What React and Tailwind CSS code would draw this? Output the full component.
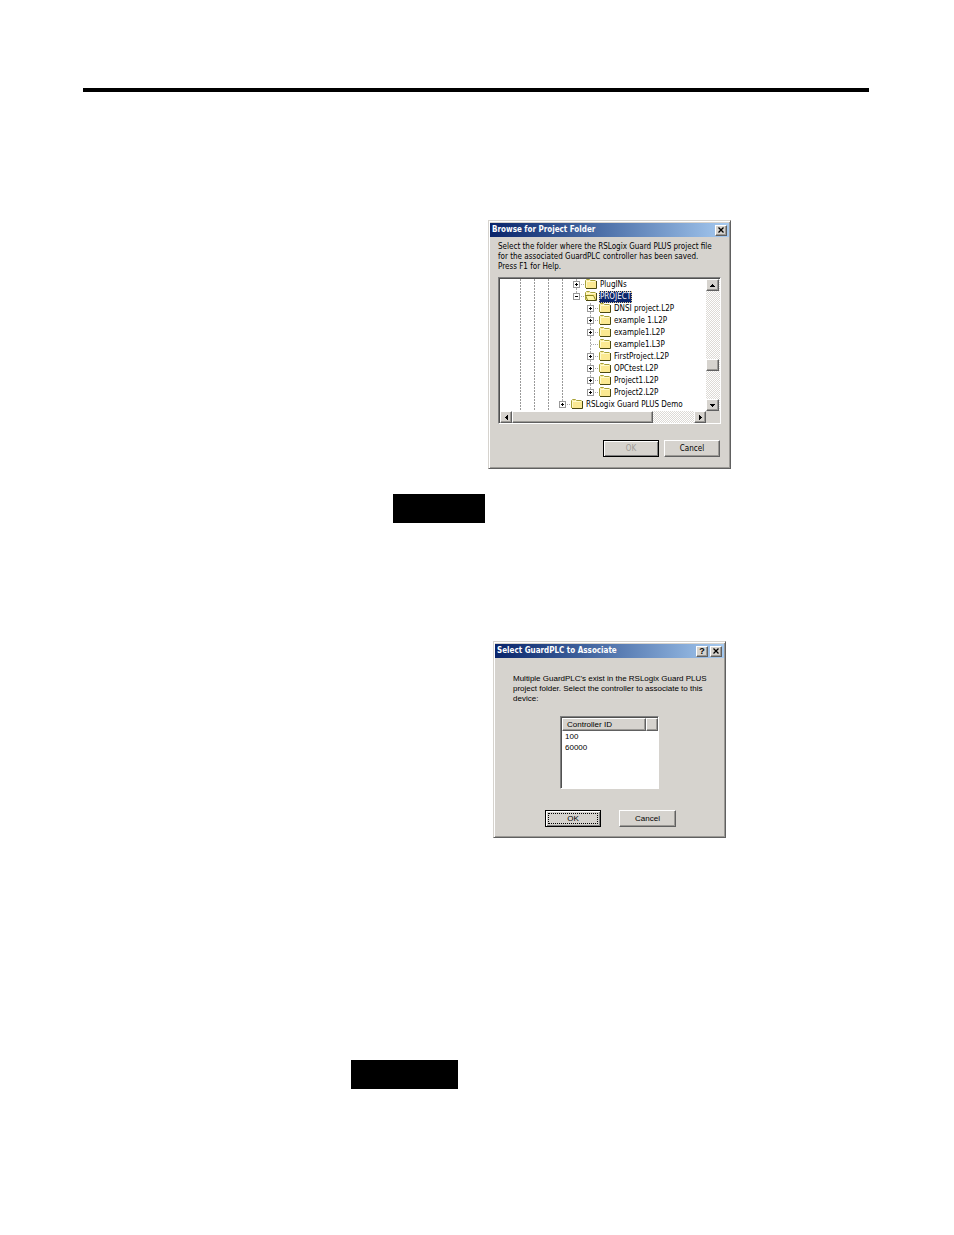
import { useState } from "react";

const folders = [
  { name: "PlugINs", level: 1, sign: "+" },
  { name: "PROJECT", level: 1, sign: "-", open: true },
  { name: "DNSI project.L2P", level: 2, sign: "+" },
  { name: "example 1.L2P", level: 2, sign: "+" },
  { name: "example1.L2P", level: 2, sign: "+" },
  { name: "example1.L3P", level: 2, sign: "" },
  { name: "FirstProject.L2P", level: 2, sign: "+" },
  { name: "OPCtest.L2P", level: 2, sign: "+" },
  { name: "Project1.L2P", level: 2, sign: "+" },
  { name: "Project2.L2P", level: 2, sign: "+", last: true },
  { name: "RSLogix Guard PLUS Demo", level: 0, sign: "+", last: true },
];

const raised = "border border-t-white border-l-white border-r-[#606060] border-b-[#606060] bg-[#d6d3ce] shadow-[inset_-1px_-1px_0_#9c9a96]";
const checker = "bg-[conic-gradient(#fff_25%,#dddad5_0_50%,#fff_0_75%,#dddad5_0)] bg-size-[2px_2px]";

function Arrow({ d }) {
  return (
    <svg width="7" height="7" viewBox="0 0 7 7" shapeRendering="crispEdges">
      <path d={d} fill="#000" />
    </svg>
  );
}

function FolderIcon({ open }) {
  return (
    <svg width="12" height="10" viewBox="0 0 12 10" className="shrink-0">
      <path d="M1 9.5H11.5V2" fill="none" stroke="#4a4810" />
      <path d="M.5 9V1.5L1.5 .5H4.5L5.5 1.5H10.5" fill="none" stroke="#a8a238" />
      <path d="M1 9V2L2 1H4L5 2H11V9Z" fill="#fbe992" />
      <path d="M1.5 8V2.5H10" fill="none" stroke="#fffacb" />
      {open && <path d="M0 4H9L11 9H2Z" fill="#fff7a8" />}
      {open && <path d="M0 4.5H8.5L10.5 9M.5 4.5L2.5 9" fill="none" stroke="#8c861c" />}
    </svg>
  );
}

function Expander({ sign, last }) {
  return (
    <svg width="16" height="12" viewBox="0 0 16 12" shapeRendering="crispEdges" className="shrink-0">
      <path d={last ? "M7.5 0V6" : "M7.5 0V12"} stroke="#aaa" strokeDasharray="2 1" />
      <path d="M8 5.5H16" stroke="#aaa" strokeDasharray="1 1" />
      {sign && <rect x="4.5" y="2.5" width="6" height="6" fill="#fff" stroke="#999" />}
      {sign && <path d="M6 5.5H9" stroke="#000" />}
      {sign === "+" && <path d="M7.5 4V7" stroke="#000" />}
    </svg>
  );
}

function Guide() {
  return (
    <svg width="14" height="12" viewBox="0 0 14 12" shapeRendering="crispEdges" className="shrink-0">
      <path d="M7.5 0V12" stroke="#999" strokeDasharray="2 1" />
    </svg>
  );
}

function TitleButton({ label, children }) {
  return (
    <button aria-label={label} className={`flex h-[11px] w-3 items-center justify-center ${raised}`}>
      {children}
    </button>
  );
}

function CloseIcon() {
  return (
    <svg width="6" height="6" viewBox="0 0 6 6">
      <path d="M.5 .5L5.5 5.5M5.5 .5L.5 5.5" stroke="#000" strokeWidth="1.3" />
    </svg>
  );
}

function TitleBar({ title, children }) {
  return (
    <div className="flex h-[14px] items-center bg-linear-to-r from-[#0a246a] to-[#a6caf0] px-[2px] text-white">
      <h2 className="flex-1 font-['DejaVu_Sans_Condensed','DejaVu_Sans',sans-serif] text-[8px] leading-3 font-bold whitespace-nowrap">{title}</h2>
      {children}
    </div>
  );
}

function FolderRow({ folder, selected, onSelect }) {
  const guides = folder.level === 0 ? 3 : 4;
  return (
    <li className="flex h-3 items-start pl-[13px]">
      {Array.from({ length: guides }, (_, i) => <Guide key={i} />)}
      {folder.level === 2 && <span className="w-[14px] shrink-0" />}
      <Expander sign={folder.sign} last={folder.last || folder.open} />
      <FolderIcon open={folder.open} />
      <button
        onClick={onSelect}
        className={`ml-[2px] h-3 px-px text-[8px] leading-3 whitespace-nowrap ${selected ? "bg-[#0a246a] text-white outline-1 -outline-offset-1 outline-dotted outline-[#e0c890]" : "text-black"}`}
      >
        {folder.name}
      </button>
    </li>
  );
}

function BrowseDialog() {
  const [selected, setSelected] = useState("PROJECT");

  return (
    <section className="ml-[405px] w-[243px] border border-t-[#d6d3ce] border-l-[#d6d3ce] border-r-[#606060] border-b-[#606060] bg-[#d6d3ce] p-px pb-[11px] font-['DejaVu_Sans_Condensed','DejaVu_Sans',sans-serif] shadow-[inset_1px_1px_0_#fff,inset_-1px_-1px_0_#9c9a96]">
      <div className="pt-px">
        <TitleBar title="Browse for Project Folder">
          <TitleButton label="Close"><CloseIcon /></TitleButton>
        </TitleBar>
      </div>
      <p className="mt-[5px] ml-2 text-[8px] leading-[10px] whitespace-nowrap">
        Select the folder where the RSLogix Guard PLUS project file<br />
        for the associated GuardPLC controller has been saved.<br />
        Press F1 for Help.
      </p>
      <div className="mx-2 mt-[5px] border border-t-[#808080] border-l-[#808080] border-r-white border-b-white bg-white">
        <div className="flex border-t border-l border-[#505050]">
          <ul className="h-[132px] flex-1 overflow-hidden">
            {folders.map((f) => (
              <FolderRow key={f.name} folder={f} selected={selected === f.name} onSelect={() => setSelected(f.name)} />
            ))}
          </ul>
          <div className={`flex w-[14px] flex-col pr-px ${checker}`}>
            <button aria-label="Scroll up" className={`flex h-3 items-center justify-center ${raised}`}><Arrow d="M3 2H4V3H5V4H6V5H1V4H2V3H3Z" /></button>
            <div className="flex-1" />
            <div className={`mb-7 h-3 ${raised}`} />
            <button aria-label="Scroll down" className={`flex h-3 items-center justify-center ${raised}`}><Arrow d="M1 2H6V3H5V4H4V5H3V4H2V3H1Z" /></button>
          </div>
        </div>
        <div className="flex h-3 border-l border-[#505050] bg-[#d6d3ce]">
          <button aria-label="Scroll left" className={`flex w-3 items-center justify-center ${raised}`}><Arrow d="M2 3H3V2H4V1H5V6H4V5H3V4H2Z" /></button>
          <div className={`flex flex-1 ${checker}`}>
            <div className={`w-[141px] ${raised}`} />
          </div>
          <button aria-label="Scroll right" className={`flex w-3 items-center justify-center ${raised}`}><Arrow d="M2 1H3V2H4V3H5V4H4V5H3V6H2Z" /></button>
          <div className="w-[14px]" />
        </div>
      </div>
      <div className="mt-4 mr-[9px] flex justify-end gap-[5px]">
        <button disabled className="h-[17px] w-14 border border-black bg-[#d6d3ce] text-[8px] leading-none text-[#9c9a96] shadow-[inset_1px_1px_0_#fff,inset_-1px_-1px_0_#808080]">OK</button>
        <button className={`h-[17px] w-14 text-[8px] leading-none ${raised}`}>Cancel</button>
      </div>
    </section>
  );
}

function AssociateDialog() {
  return (
    <section className="ml-[410px] w-[233px] border border-t-[#d6d3ce] border-l-[#d6d3ce] border-r-[#606060] border-b-[#606060] bg-[#d6d3ce] p-px pb-[10px] font-['Liberation_Sans',sans-serif] shadow-[inset_1px_1px_0_#fff,inset_-1px_-1px_0_#9c9a96]">
      <div className="pt-px">
        <TitleBar title="Select GuardPLC to Associate">
          <TitleButton label="Help"><span className="text-[9px] leading-none font-bold text-black">?</span></TitleButton>
          <span className="w-[2px]" />
          <TitleButton label="Close"><CloseIcon /></TitleButton>
        </TitleBar>
      </div>
      <p className="mt-4 ml-[18px] text-[8px] leading-[10px] whitespace-nowrap">
        Multiple GuardPLC's exist in the RSLogix Guard PLUS<br />
        project folder. Select the controller to associate to this<br />
        device:
      </p>
      <div className="mt-3 ml-[65px] h-[73px] w-[99px] border border-t-[#808080] border-l-[#808080] border-r-white border-b-white bg-white">
        <div className="h-full border-t border-l border-[#505050]">
          <table className="w-full border-separate border-spacing-0 text-left text-[8px] leading-[11px]">
            <thead>
              <tr>
                <th className={`h-[13px] px-1 py-0 font-normal ${raised}`}>Controller ID</th>
                <th className={`w-3 p-0 ${raised}`}></th>
              </tr>
            </thead>
            <tbody>
              <tr><td colSpan={2} className="px-[3px] py-0">100</td></tr>
              <tr><td colSpan={2} className="px-[3px] py-0">60000</td></tr>
            </tbody>
          </table>
        </div>
      </div>
      <div className="mt-[21px] ml-[50px] flex gap-[18px]">
        <button className="h-[17px] w-14 border border-black bg-[#d6d3ce] p-[2px] text-[8px] leading-none shadow-[inset_1px_1px_0_#fff,inset_-1px_-1px_0_#808080]">
          <span className="flex h-full items-center justify-center border border-dotted border-black">OK</span>
        </button>
        <button className={`h-[17px] w-[57px] text-[8px] leading-none ${raised}`}>Cancel</button>
      </div>
    </section>
  );
}

export default function App() {
  return (
    <main className="min-h-screen bg-white pt-22 pr-[85px] pb-36 pl-[83px] text-black">
      <hr className="mb-32 border-0 border-t-4 border-black" />
      <BrowseDialog />
      <div className="mt-[25px] ml-[310px] h-[29px] w-[92px] bg-black" />
      <div className="h-[118px]" />
      <AssociateDialog />
      <div className="mt-[222px] ml-[268px] h-[29px] w-[107px] bg-black" />
    </main>
  );
}
